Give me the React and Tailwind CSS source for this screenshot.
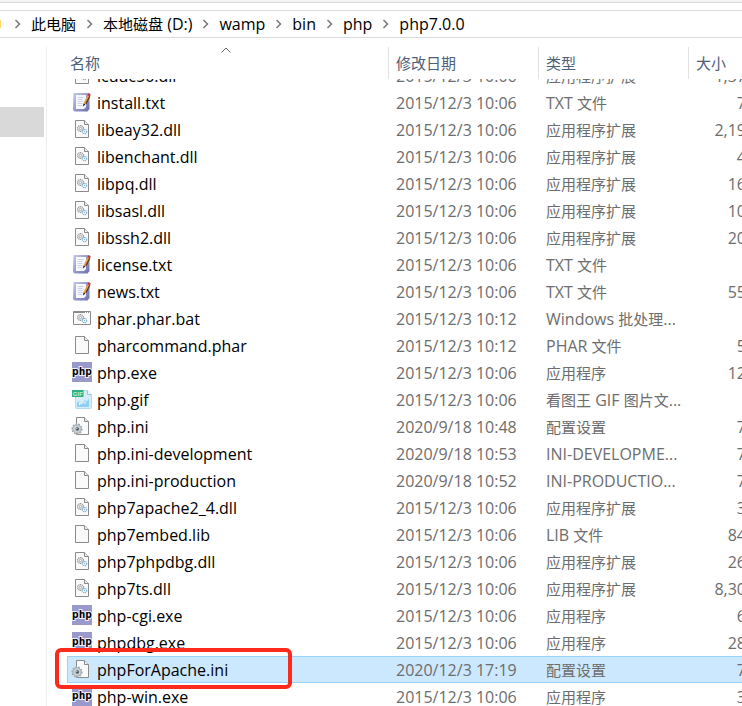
import React from "react";

const files = [
  ["dll", "icuuc50.dll", "2015/12/3 10:06", "应用程序扩展", "1,37"],
  ["txt", "install.txt", "2015/12/3 10:06", "TXT 文件", "7"],
  ["dll", "libeay32.dll", "2015/12/3 10:06", "应用程序扩展", "2,19"],
  ["dll", "libenchant.dll", "2015/12/3 10:06", "应用程序扩展", "4"],
  ["dll", "libpq.dll", "2015/12/3 10:06", "应用程序扩展", "16"],
  ["dll", "libsasl.dll", "2015/12/3 10:06", "应用程序扩展", "10"],
  ["dll", "libssh2.dll", "2015/12/3 10:06", "应用程序扩展", "20"],
  ["txt", "license.txt", "2015/12/3 10:06", "TXT 文件", ""],
  ["txt", "news.txt", "2015/12/3 10:06", "TXT 文件", "55"],
  ["bat", "phar.phar.bat", "2015/12/3 10:12", "Windows 批处理...", ""],
  ["file", "pharcommand.phar", "2015/12/3 10:12", "PHAR 文件", "5"],
  ["php", "php.exe", "2015/12/3 10:06", "应用程序", "12"],
  ["gif", "php.gif", "2015/12/3 10:06", "看图王 GIF 图片文...", ""],
  ["ini", "php.ini", "2020/9/18 10:48", "配置设置", "7"],
  ["file", "php.ini-development", "2020/9/18 10:53", "INI-DEVELOPME...", "7"],
  ["file", "php.ini-production", "2020/9/18 10:52", "INI-PRODUCTIO...", "7"],
  ["dll", "php7apache2_4.dll", "2015/12/3 10:06", "应用程序扩展", "3"],
  ["file", "php7embed.lib", "2015/12/3 10:06", "LIB 文件", "84"],
  ["dll", "php7phpdbg.dll", "2015/12/3 10:06", "应用程序扩展", "26"],
  ["dll", "php7ts.dll", "2015/12/3 10:06", "应用程序扩展", "8,30"],
  ["php", "php-cgi.exe", "2015/12/3 10:06", "应用程序", "6"],
  ["php", "phpdbg.exe", "2015/12/3 10:06", "应用程序", "28"],
  ["ini", "phpForApache.ini", "2020/12/3 17:19", "配置设置", "7"],
  ["php", "php-win.exe", "2015/12/3 10:06", "应用程序", "3"],
];

const path = ["此电脑", "本地磁盘 (D:)", "wamp", "bin", "php", "php7.0.0"];

// Han characters are set one pixel smaller than the Latin text beside them.
function Mixed({ text }) {
  return text.split(/([\u4e00-\u9fff]+)/).map((run, i) =>
    i % 2 ? (
      <span key={i} className="text-[15px]">
        {run}
      </span>
    ) : (
      run
    )
  );
}

function Page() {
  return (
    <>
      <path d="M3.5 0.5h9l4 4v13h-13z" fill="#fafafa" stroke="#8b8b8b" />
      <path d="M12.5 0.5v4h4" fill="#eee" stroke="#8b8b8b" />
    </>
  );
}

function Gears() {
  return (
    <g fill="none">
      <circle cx="8.5" cy="8.5" r="2.9" stroke="#8f9599" strokeWidth="1.2" strokeDasharray="1.3 0.5" />
      <circle cx="8.5" cy="8.5" r="1.2" stroke="#8f9599" strokeWidth="0.8" />
      <circle cx="12.5" cy="11.5" r="2.2" stroke="#82b2d1" strokeWidth="1.2" strokeDasharray="1.2 0.5" />
      <circle cx="12.5" cy="11.5" r="0.7" fill="#82b2d1" />
    </g>
  );
}

function Icon({ kind }) {
  return (
    <svg viewBox="0 0 20 20" className="size-5 shrink-0 overflow-visible" aria-hidden="true">
      <defs>
        <linearGradient id="notebook" x1="0" y1="0" x2="1" y2="1">
          <stop offset="0" stopColor="#c5c8ec" />
          <stop offset="1" stopColor="#6c6fae" />
        </linearGradient>
      </defs>
      {kind === "file" && <Page />}
      {kind === "dll" && (
        <>
          <Page />
          <Gears />
        </>
      )}
      {kind === "bat" && (
        <>
          <path d="M1.5 2.5h17v13h-17z" fill="#fafafa" stroke="#8b8b8b" />
          <path d="M2 3.5h16" stroke="#8b8b8b" />
          <path d="M13 3.5h1M15 3.5h1M17 3.5h1" stroke="#fff" />
          <Gears />
        </>
      )}
      {kind === "txt" && (
        <>
          <path d="M1.5 0h16v16l-2 2.5H2.5L1 17z" fill="url(#notebook)" />
          <path d="M4 2h10v12l-2 2H4z" fill="#f8f9ff" />
          <path d="M5.5 4.5h6M5.5 6.5h5M5.5 8.5h5M5.5 10.5h5M5.5 12.5h5" stroke="#c0c7e4" strokeWidth="0.8" />
          <path d="M11.3 12.8l.7-3.5 3.5-7.3 2.6 1.2-3.8 7.4z" fill="#dfa257" />
          <path d="M14 10.6l3.8-7.3" stroke="#5d3216" strokeWidth="1.2" />
          <path d="M15.3 2.3l.8-1.5q1.5-.8 2.6.6l-.7 2z" fill="#c43a38" />
          <path d="M11 13.6l.5-3 2 1z" fill="#252525" />
        </>
      )}
      {kind === "php" && (
        <>
          <path d="M0 -1h20v20H0z" fill="#9999cc" />
          <text
            x="10"
            y="12"
            textAnchor="middle"
            className="fill-black stroke-[#f0f0fa] font-['DejaVu_Sans_Mono',monospace] text-[11px] font-bold"
            strokeWidth="2"
            paintOrder="stroke"
          >
            php
          </text>
        </>
      )}
      {kind === "gif" && (
        <>
          <path d="M3.5 0.5h12l4 4v13q0 1-1 1h-14q-1 0-1-1z" fill="#d6ecfa" stroke="#b6d9ef" />
          <path d="M15.5 0.5v4h4" fill="#f3fbff" stroke="#94c6e6" />
          <path d="M5 17v-4l2-2 1.5 2 1.5 1.5 3-4.5 2 1.5 2-3V17z" fill="#8fcff2" />
          <path d="M7 12l2 1.500-2 2zM13 11l1 2-2 1z" fill="#fff" />
          <path d="M0 0h11.500v7H0z" fill="#2bb083" />
          <text
            x="5.8"
            y="5.5"
            textAnchor="middle"
            className="fill-[#bff0dc] font-['Liberation_Sans',sans-serif] text-[6px] font-bold"
          >
            GIF
          </text>
        </>
      )}
      {kind === "ini" && (
        <>
          <path d="M4.500 0.500h8l4 4v13h-12z" fill="#fafafa" stroke="#8b8b8b" />
          <path d="M12.500 0.500v4h4" fill="#eee" stroke="#8b8b8b" />
          <circle cx="5" cy="12" r="4.800" fill="none" stroke="#a3abb1" strokeWidth="1.600" strokeDasharray="1.800 1.100" />
          <circle cx="5" cy="12" r="4.200" fill="#c9d0d5" stroke="#9aa3a9" strokeWidth="0.800" />
          <circle cx="5.300" cy="12" r="1.700" fill="#4a545c" />
          <circle cx="4.800" cy="11.600" r="0.700" fill="#dfe6ea" />
        </>
      )}
    </svg>
  );
}

function Chevron() {
  return (
    <svg viewBox="0 0 27 20" className="h-5 w-[27px] shrink-0" aria-hidden="true">
      <path d="M11.5 6l4 4-4 4" fill="none" stroke="#777" strokeWidth="1.5" />
    </svg>
  );
}

function HeaderCell({ label, first }) {
  return (
    <th scope="col" className="p-0 text-left align-top font-normal">
      <div
        className={
          "relative z-10 -mb-[17px] h-10 bg-white pt-2 " + (first ? "" : "-ml-px")
        }
      >
        <button
          type="button"
          className={
            "flex h-8 w-full items-center text-left text-[15px] text-[#4c607a] " +
            (first ? "pl-[3px]" : "border-l border-[#e2e2e2] pl-[7px]")
          }
        >
          {label}
        </button>
        {first && (
          <svg viewBox="0 0 12 7" className="absolute top-2 right-[157px] h-[7px] w-3" aria-hidden="true">
            <path d="M1.5 5.5L6 1l4.5 4.5" fill="none" stroke="#666" />
          </svg>
        )}
      </div>
    </th>
  );
}

export default function App() {
  return (
    <div className="flex h-screen flex-col overflow-hidden bg-white font-['Open_Sans','Noto_Sans_CJK_SC',sans-serif] text-[16px] leading-[26px] text-black">
      <div className="h-[3px] shrink-0 border-b border-[#d9dbdc] bg-[#f3f5f7]" />
      <nav
        aria-label="路径"
        className="mt-[7px] flex h-7 shrink-0 items-center border-y border-[#d9d9d9] whitespace-nowrap"
      >
        <span className="mr-[3px] h-2 w-px bg-[#ffd96b]" />
        {path.map((part) => (
          <React.Fragment key={part}>
            <Chevron />
            <a href="#">
              <Mixed text={part} />
            </a>
          </React.Fragment>
        ))}
      </nav>
      <div className="flex min-h-0 flex-1">
        <aside className="mt-[9px] w-[47px] shrink-0 border-r border-[#eeeeee] pt-[60px]">
          <div className="mr-[2px] h-[30px] bg-[#d9d9d9]" />
        </aside>
        <main className="min-w-0 flex-1 overflow-hidden pt-px pl-5">
          <table className="w-[679px] table-fixed border-collapse">
            <colgroup>
              <col className="w-[322px]" />
              <col className="w-[150px]" />
              <col className="w-[150px]" />
              <col />
            </colgroup>
            <thead>
              <tr>
                <HeaderCell label="名称" first />
                <HeaderCell label="修改日期" />
                <HeaderCell label="类型" />
                <HeaderCell label="大小" />
              </tr>
            </thead>
            <tbody>
              {files.map(([kind, name, date, type, size]) => {
                const selected = name === "phpForApache.ini";
                return (
                  <tr
                    key={name}
                    className={
                      "h-[27px] whitespace-nowrap text-[#6d6d6d] " +
                      (selected ? "bg-[#cce8ff] shadow-[inset_0_0_0_1px_#99d1ff]" : "")
                    }
                  >
                    <td className="relative p-0 text-black">
                      <div className="flex items-center gap-[5px] pl-[5px]">
                        <Icon kind={kind} />
                        {name}
                      </div>
                      {selected && (
                        <div className="absolute -top-2 -left-3 z-10 h-[41px] w-[237px] rounded-md border-4 border-[#fb2a1b]" />
                      )}
                    </td>
                    <td className="p-0 pl-[7px]">{date}</td>
                    <td className="p-0 pl-[7px]">
                      <Mixed text={type} />
                    </td>
                    <td className="p-0 text-right">{size}</td>
                  </tr>
                );
              })}
            </tbody>
          </table>
        </main>
      </div>
    </div>
  );
}
